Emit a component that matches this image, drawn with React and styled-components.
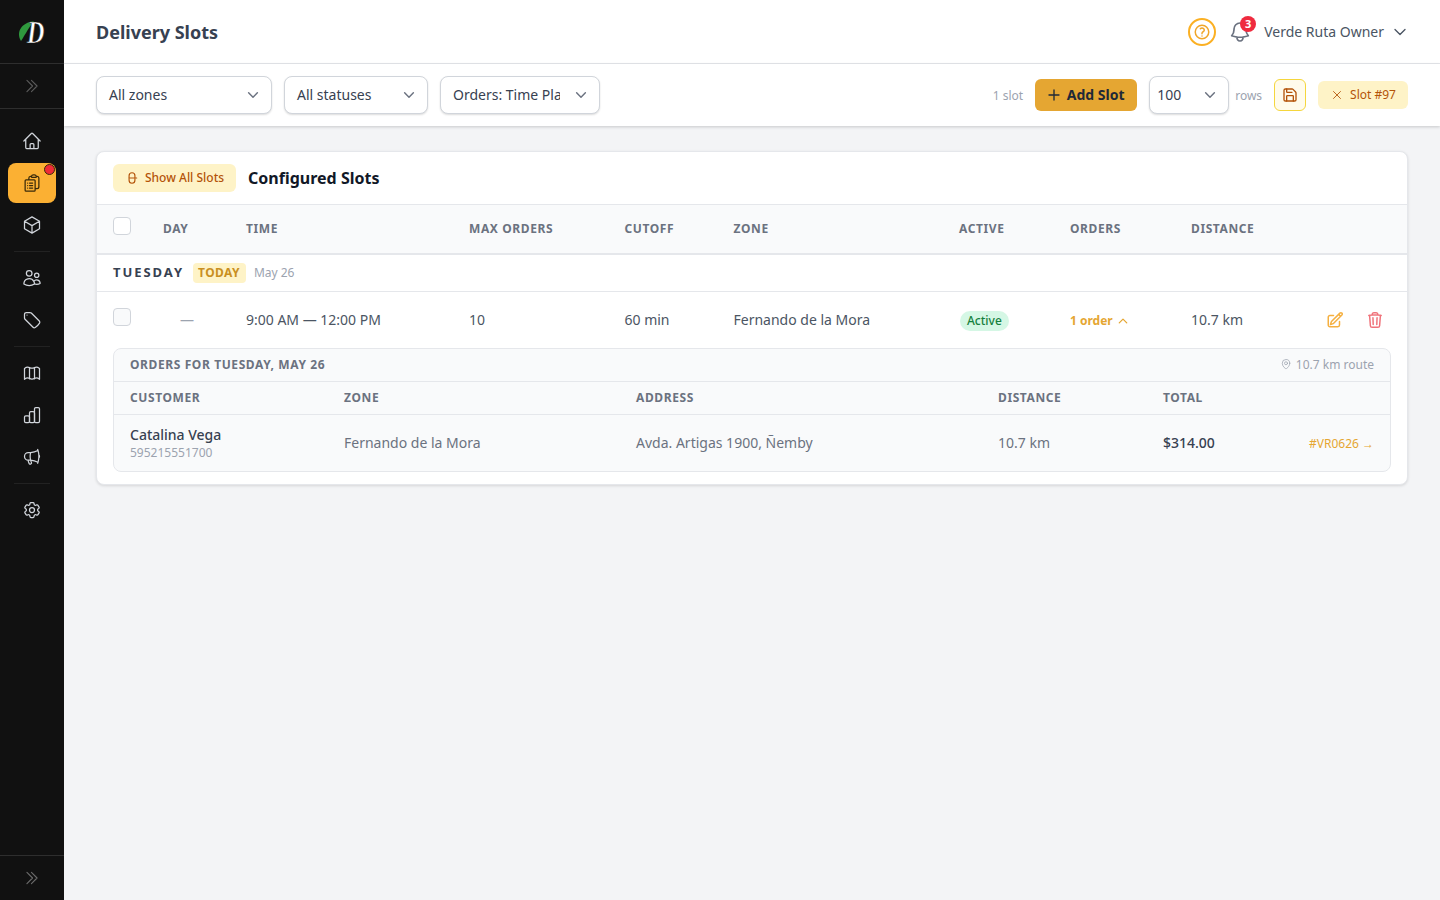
import React from 'react';
import styled, { createGlobalStyle } from 'styled-components';
import {
  HiOutlineHome,
  HiOutlineClipboardDocumentList,
  HiOutlineCube,
  HiOutlineUsers,
  HiOutlineTag,
  HiOutlineMegaphone,
  HiOutlineCog6Tooth,
  HiOutlineChevronDoubleRight,
  HiOutlineBell,
  HiOutlineQuestionMarkCircle,
  HiOutlinePencilSquare,
  HiOutlineTrash,
  HiOutlineMapPin,
  HiOutlineXMark,
  HiOutlinePlus,
  HiOutlineChevronDown,
  HiOutlineChevronUp,
} from 'react-icons/hi2';
import { LuSave } from 'react-icons/lu';

const GlobalStyle = createGlobalStyle`
  html, body { margin: 0; padding: 0; height: 100%; }
  body {
    font-family: "Noto Sans", "Liberation Sans", sans-serif;
    background: #f3f4f6;
    color: #374151;
  }
  * { box-sizing: border-box; }
`;

const Shell = styled.div`
  display: flex;
  width: 1440px;
  height: 900px;
  overflow: hidden;
`;

const Sidebar = styled.aside`
  width: 64px;
  flex: none;
  display: flex;
  flex-direction: column;
  background: #111111;
  color: #d1d5db;
`;

const LogoBox = styled.div`
  height: 64px;
  flex: none;
  display: flex;
  align-items: center;
  justify-content: center;
  border-bottom: 1px solid #2e2e2e;
  svg { overflow: visible; }
`;

const CollapseBox = styled.div`
  height: 45px;
  flex: none;
  display: flex;
  align-items: center;
  justify-content: center;
  color: #5b5b5b;
  border-bottom: 1px solid #2e2e2e;
  font-size: 18px;
`;

const Nav = styled.nav`
  flex: 1;
  display: flex;
  flex-direction: column;
  align-items: center;
  padding-top: 11px;
`;

const NavItem = styled.div`
  position: relative;
  width: 48px;
  height: ${(p) => p.$h || 42}px;
  margin-top: ${(p) => (p.$active ? 1 : 0)}px;
  display: flex;
  align-items: center;
  justify-content: center;
  font-size: 20px;
  border-radius: 8px;
  color: ${(p) => (p.$active ? '#3a2a0a' : '#d1d5db')};
  background: ${(p) => (p.$active ? '#fbb033' : 'transparent')};
`;

const NavDot = styled.span`
  position: absolute;
  top: 1px;
  right: 1px;
  width: 11px;
  height: 11px;
  border-radius: 50%;
  background: #ef2b36;
  border: 1px solid #3a2a0a;
`;

const NavDivider = styled.div`
  width: 36px;
  height: 1px;
  margin: ${(p) => p.$top || 5}px 0 5px;
  background: #222222;
`;

const BottomBox = styled.div`
  height: 45px;
  flex: none;
  display: flex;
  align-items: center;
  justify-content: center;
  color: #6b6b6b;
  border-top: 1px solid #2e2e2e;
  font-size: 18px;
`;

const Content = styled.div`
  flex: 1;
  min-width: 0;
  display: flex;
  flex-direction: column;
`;

const Header = styled.header`
  height: 64px;
  flex: none;
  display: flex;
  align-items: center;
  justify-content: space-between;
  padding: 0 32px;
  background: #ffffff;
  border-bottom: 1px solid #e5e7eb;
`;

const PageTitle = styled.h1`
  margin: 0;
  font-size: 18px;
  font-weight: 700;
  color: #374151;
`;

const HeaderRight = styled.div`
  display: flex;
  align-items: center;
`;

const HelpButton = styled.div`
  width: 28px;
  height: 28px;
  display: flex;
  align-items: center;
  justify-content: center;
  border: 2px solid #fbb023;
  border-radius: 50%;
  color: #f0a62a;
  font-size: 18px;
  margin-right: 14px;
  svg { stroke-width: 2; }
`;

const BellWrap = styled.div`
  position: relative;
  width: 20px;
  height: 24px;
  display: flex;
  align-items: center;
  justify-content: center;
  color: #6b7280;
  font-size: 24px;
  margin-right: 14px;
  svg { flex: none; stroke-width: 1.7; }
`;

const BellBadge = styled.span`
  position: absolute;
  top: -4px;
  right: -6px;
  width: 16px;
  height: 16px;
  display: flex;
  align-items: center;
  justify-content: center;
  border-radius: 50%;
  background: #ef2b3f;
  color: #ffffff;
  font-size: 11px;
  font-weight: 700;
`;

const UserName = styled.span`
  font-size: 14px;
  color: #4b5563;
  margin-right: 8px;
`;

const UserCaret = styled.span`
  display: flex;
  color: #4b5563;
  font-size: 16px;
  svg { stroke-width: 2; }
`;

const Toolbar = styled.div`
  height: 62px;
  flex: none;
  display: flex;
  align-items: center;
  justify-content: space-between;
  padding: 0 32px;
  background: #ffffff;
  box-shadow: 0 1px 3px rgba(0, 0, 0, 0.18);
  position: relative;
`;

const ToolGroup = styled.div`
  display: flex;
  align-items: center;
  gap: 12px;
`;

const SelectBox = styled.div`
  width: ${(p) => p.$w}px;
  height: 38px;
  display: flex;
  align-items: center;
  justify-content: space-between;
  padding: 0 11px 2px ${(p) => p.$left || 12}px;
  background: #ffffff;
  border: 1px solid #d1d5db;
  border-radius: 8px;
  box-shadow: 0 1px 2px rgba(0, 0, 0, 0.14);
  font-size: 14px;
  color: #374151;
  white-space: nowrap;
`;

const SelectValue = styled.span`
  display: block;
  max-width: 107px;
  overflow: hidden;
`;

const Caret = styled.span`
  display: flex;
  margin-top: 2px;
  font-size: 14px;
  color: #6b7280;
  svg { stroke-width: 2.5; }
`;

const MutedSmall = styled.span`
  font-size: 12px;
  color: #9ca3af;
  margin-left: ${(p) => p.$shift || 0}px;
`;

const AddButton = styled.div`
  height: 32px;
  width: 102px;
  display: flex;
  align-items: center;
  justify-content: center;
  gap: 5px;
  padding: 0 2px 2px 0;
  background: #e5a632;
  border-radius: 6px;
  color: #1f2937;
  font-size: 14px;
  font-weight: 700;
  svg { font-size: 16px; stroke-width: 2; margin-top: 2px; }
`;

const SaveButton = styled.div`
  width: 32px;
  height: 32px;
  display: flex;
  align-items: center;
  justify-content: center;
  background: #fffbeb;
  border: 1px solid #f5d63d;
  border-radius: 6px;
  color: #b45309;
  font-size: 16px;
`;

const ChipButton = styled.div`
  height: 28px;
  display: inline-flex;
  align-items: center;
  gap: 6px;
  padding: 0 12px ${(p) => p.$lift || 0}px;
  background: #fef3c7;
  border-radius: 6px;
  color: #b45309;
  font-size: 12px;
  font-weight: ${(p) => p.$weight || 400};
  svg { font-size: 14px; margin-top: ${(p) => p.$lift || 0}px; }
`;

const Main = styled.main`
  flex: 1;
  padding: 25px 32px;
  background: #f3f4f6;
`;

const Card = styled.section`
  background: #ffffff;
  border: 1px solid #e5e7eb;
  border-radius: 8px;
  box-shadow: 0 1px 3px rgba(0, 0, 0, 0.12);
  overflow: hidden;
`;

const CardTop = styled.div`
  height: 53px;
  display: flex;
  align-items: center;
  gap: 12px;
  padding: 0 16px 1px;
  border-bottom: 1px solid #e5e7eb;
`;

const CardTitle = styled.h2`
  margin: 0;
  font-size: 16px;
  font-weight: 700;
  color: #111827;
`;

const slotCols = '50px 83px 223px 155.5px 109px 225.5px 111px 121px 60px 1fr';

const SlotHead = styled.div`
  height: 50px;
  display: grid;
  grid-template-columns: ${slotCols};
  align-items: center;
  padding: 0 16px 2px;
  background: #f9fafb;
  border-bottom: 2px solid #e5e7eb;
`;

const ColLabel = styled.span`
  font-size: 12px;
  font-weight: 700;
  letter-spacing: 0.6px;
  color: #6b7280;
  white-space: nowrap;
`;

const CheckBox = styled.span`
  display: block;
  width: 18px;
  height: 18px;
  margin-top: -4px;
  background: ${(p) => (p.$tint ? '#f9fafb' : '#ffffff')};
  border: 1px solid #d1d5db;
  border-radius: 4px;
`;

const DayRow = styled.div`
  height: 37px;
  display: flex;
  align-items: center;
  padding: 0 16px 2px;
  border-bottom: 1px solid #e5e7eb;
`;

const DayName = styled.span`
  font-size: 13px;
  font-weight: 700;
  letter-spacing: 1.95px;
  color: #374151;
  margin-right: 9px;
`;

const TodayTag = styled.span`
  height: 20px;
  display: inline-flex;
  align-items: center;
  padding: 0 6px 1px 5px;
  margin: 2px 8px 0 0;
  background: #fef3c7;
  border-radius: 4px;
  font-size: 12px;
  font-weight: 700;
  letter-spacing: 0.4px;
  color: #c98f1f;
`;

const SlotRow = styled.div`
  height: 56px;
  display: grid;
  grid-template-columns: ${slotCols};
  align-items: center;
  padding: 0 16px 2px;
  font-size: 14px;
  color: #4b5563;
`;

const Dash = styled.span`
  padding-left: 17px;
  color: #9ca3af;
`;

const ActiveTag = styled.span`
  justify-self: start;
  height: 20px;
  display: inline-flex;
  align-items: center;
  padding: 0 7.500px;
  margin: 3px 0 0 0.500px;
  border-radius: 10px;
  background: #d5f7e5;
  color: #15803d;
  font-size: 12px;
  font-weight: 500;
`;

const OrdersLink = styled.span`
  display: inline-flex;
  align-items: center;
  gap: 4px;
  margin-top: 3px;
  color: #e5a632;
  font-size: 12px;
  font-weight: 700;
  svg { stroke-width: 2.5; }
`;

const RowActions = styled.div`
  display: flex;
  justify-content: flex-end;
  gap: 22px;
  margin-top: 2px;
  padding-right: 7px;
  font-size: 18px;
  svg { stroke-width: 2; }
`;

const ActionIcon = styled.span`
  display: flex;
  color: ${(p) => p.$color};
`;

const OrdersPanel = styled.div`
  margin: 0 16px 12px;
  background: #f9fafb;
  border: 1px solid #e5e7eb;
  border-radius: 8px;
  overflow: hidden;
`;

const PanelTitleRow = styled.div`
  height: 33px;
  display: flex;
  align-items: center;
  justify-content: space-between;
  padding: 0 16px 2px;
  border-bottom: 1px solid #e5e7eb;
`;

const RouteNote = styled.span`
  display: inline-flex;
  align-items: center;
  gap: 4px;
  font-size: 12px;
  color: #9ca3af;
`;

const orderCols = '214px 292px 362px 165px 1fr auto';

const PanelHead = styled.div`
  height: 33px;
  display: grid;
  grid-template-columns: ${orderCols};
  align-items: center;
  padding: 0 16px 2px;
  border-bottom: 1px solid #e5e7eb;
`;

const PanelRow = styled.div`
  height: 56px;
  display: grid;
  grid-template-columns: ${orderCols};
  align-items: center;
  padding: 0 16px 2px;
  font-size: 14px;
  color: #6b7280;
`;

const CustomerCell = styled.div`
  margin-top: 2px;
`;

const CustomerName = styled.div`
  font-size: 14px;
  font-weight: 500;
  line-height: 19px;
  color: #374151;
`;

const CustomerPhone = styled.div`
  font-size: 12px;
  line-height: 17px;
  color: #9ca3af;
`;

const TotalValue = styled.span`
  font-weight: 500;
  color: #374151;
`;

const OrderRef = styled.span`
  margin-top: 2px;
  font-size: 12px;
  color: #e5a632;
`;

const Logo = () => (
  <svg width="30" height="30" viewBox="0 0 30 30">
    <path d="M4 24C-1 15 4 6 17 4c-3 4-6 8-8 12-2 3-3 5-5 8z" fill="#2f9a3e" />
    <text
      transform="translate(10 26) scale(0.75 1)"
      fontFamily="Liberation Serif, serif"
      fontSize="32"
      fontWeight="700"
      fontStyle="italic"
      fill="#ffffff"
      stroke="#111111"
      strokeWidth="0.6"
    >
      D
    </text>
  </svg>
);

const MapIcon = () => (
  <svg width="20" height="20" viewBox="0 0 24 24" fill="none" stroke="currentColor" strokeWidth="1.5" strokeLinejoin="round" strokeLinecap="round">
    <path d="M3 6.500C5 5 7 4.500 9 5.500c2 1 4 1 6 0s4-.5 6 1v13c-2-1.500-4-2-6-1s-4 1-6 0-4-.5-6 1z" />
    <path d="M9 5.500v13.500M15 5.500v13.500" />
  </svg>
);

const BarsIcon = () => (
  <svg width="20" height="20" viewBox="0 0 24 24" fill="none" stroke="currentColor" strokeWidth="1.5" strokeLinejoin="round">
    <rect x="3" y="13" width="6" height="8" rx="1.500" />
    <rect x="9" y="8" width="6" height="13" rx="1.500" />
    <rect x="15" y="3" width="6" height="18" rx="1.500" />
  </svg>
);

const LinkIcon = () => (
  <svg width="14" height="14" viewBox="0 0 24 24" fill="none" stroke="currentColor" strokeWidth="2" strokeLinecap="round">
    <path d="M7 11V8a5 5 0 0 1 10 0v3" />
    <path d="M17 13v3a5 5 0 0 1-10 0v-3" />
    <path d="M7 12h13" />
  </svg>
);

const navTop = [
  { icon: <HiOutlineHome />, h: 42 },
  { icon: <HiOutlineClipboardDocumentList />, h: 40, active: true },
  { icon: <HiOutlineCube />, h: 44 },
];

const App = () => (
  <Shell>
    <GlobalStyle />
    <Sidebar>
      <LogoBox><Logo /></LogoBox>
      <CollapseBox><HiOutlineChevronDoubleRight /></CollapseBox>
      <Nav>
        {navTop.map((item, i) => (
          <NavItem key={i} $h={item.h} $active={item.active}>
            {item.icon}
            {item.active && <NavDot />}
          </NavItem>
        ))}
        <NavDivider $top={4} />
        <NavItem><HiOutlineUsers /></NavItem>
        <NavItem><HiOutlineTag /></NavItem>
        <NavDivider />
        <NavItem><MapIcon /></NavItem>
        <NavItem><BarsIcon /></NavItem>
        <NavItem><HiOutlineMegaphone /></NavItem>
        <NavDivider />
        <NavItem><HiOutlineCog6Tooth /></NavItem>
      </Nav>
      <BottomBox><HiOutlineChevronDoubleRight /></BottomBox>
    </Sidebar>
    <Content>
      <Header>
        <PageTitle>Delivery Slots</PageTitle>
        <HeaderRight>
          <HelpButton><HiOutlineQuestionMarkCircle /></HelpButton>
          <BellWrap>
            <HiOutlineBell />
            <BellBadge>3</BellBadge>
          </BellWrap>
          <UserName>Verde Ruta Owner</UserName>
          <UserCaret><HiOutlineChevronDown /></UserCaret>
        </HeaderRight>
      </Header>
      <Toolbar>
        <ToolGroup>
          <SelectBox $w={176}>All zones<Caret><HiOutlineChevronDown /></Caret></SelectBox>
          <SelectBox $w={144}>All statuses<Caret><HiOutlineChevronDown /></Caret></SelectBox>
          <SelectBox $w={160}><SelectValue>Orders: Time Plan</SelectValue><Caret><HiOutlineChevronDown /></Caret></SelectBox>
        </ToolGroup>
        <ToolGroup>
          <MutedSmall>1 slot</MutedSmall>
          <AddButton><HiOutlinePlus />Add Slot</AddButton>
          <SelectBox $w={80} $left={7}>100<Caret><HiOutlineChevronDown /></Caret></SelectBox>
          <MutedSmall $shift={-6}>rows</MutedSmall>
          <SaveButton><LuSave /></SaveButton>
          <ChipButton $lift={2}><HiOutlineXMark />Slot #97</ChipButton>
        </ToolGroup>
      </Toolbar>
      <Main>
        <Card>
          <CardTop>
            <ChipButton $weight={500}><LinkIcon />Show All Slots</ChipButton>
            <CardTitle>Configured Slots</CardTitle>
          </CardTop>
          <SlotHead>
            <CheckBox />
            <ColLabel>DAY</ColLabel>
            <ColLabel>TIME</ColLabel>
            <ColLabel>MAX ORDERS</ColLabel>
            <ColLabel>CUTOFF</ColLabel>
            <ColLabel>ZONE</ColLabel>
            <ColLabel>ACTIVE</ColLabel>
            <ColLabel>ORDERS</ColLabel>
            <ColLabel>DISTANCE</ColLabel>
          </SlotHead>
          <DayRow>
            <DayName>TUESDAY</DayName>
            <TodayTag>TODAY</TodayTag>
            <MutedSmall>May 26</MutedSmall>
          </DayRow>
          <SlotRow>
            <CheckBox $tint />
            <Dash>—</Dash>
            <span>9:00 AM — 12:00 PM</span>
            <span>10</span>
            <span>60 min</span>
            <span>Fernando de la Mora</span>
            <ActiveTag>Active</ActiveTag>
            <OrdersLink>1 order <HiOutlineChevronUp /></OrdersLink>
            <span>10.7 km</span>
            <RowActions>
              <ActionIcon $color="#f5b041"><HiOutlinePencilSquare /></ActionIcon>
              <ActionIcon $color="#f0747c"><HiOutlineTrash /></ActionIcon>
            </RowActions>
          </SlotRow>
          <OrdersPanel>
            <PanelTitleRow>
              <ColLabel>ORDERS FOR TUESDAY, MAY 26</ColLabel>
              <RouteNote><HiOutlineMapPin />10.7 km route</RouteNote>
            </PanelTitleRow>
            <PanelHead>
              <ColLabel>CUSTOMER</ColLabel>
              <ColLabel>ZONE</ColLabel>
              <ColLabel>ADDRESS</ColLabel>
              <ColLabel>DISTANCE</ColLabel>
              <ColLabel>TOTAL</ColLabel>
            </PanelHead>
            <PanelRow>
              <CustomerCell>
                <CustomerName>Catalina Vega</CustomerName>
                <CustomerPhone>595215551700</CustomerPhone>
              </CustomerCell>
              <span>Fernando de la Mora</span>
              <span>Avda. Artigas 1900, Ñemby</span>
              <span>10.7 km</span>
              <TotalValue>$314.00</TotalValue>
              <OrderRef>#VR0626 →</OrderRef>
            </PanelRow>
          </OrdersPanel>
        </Card>
      </Main>
    </Content>
  </Shell>
);

export default App;
